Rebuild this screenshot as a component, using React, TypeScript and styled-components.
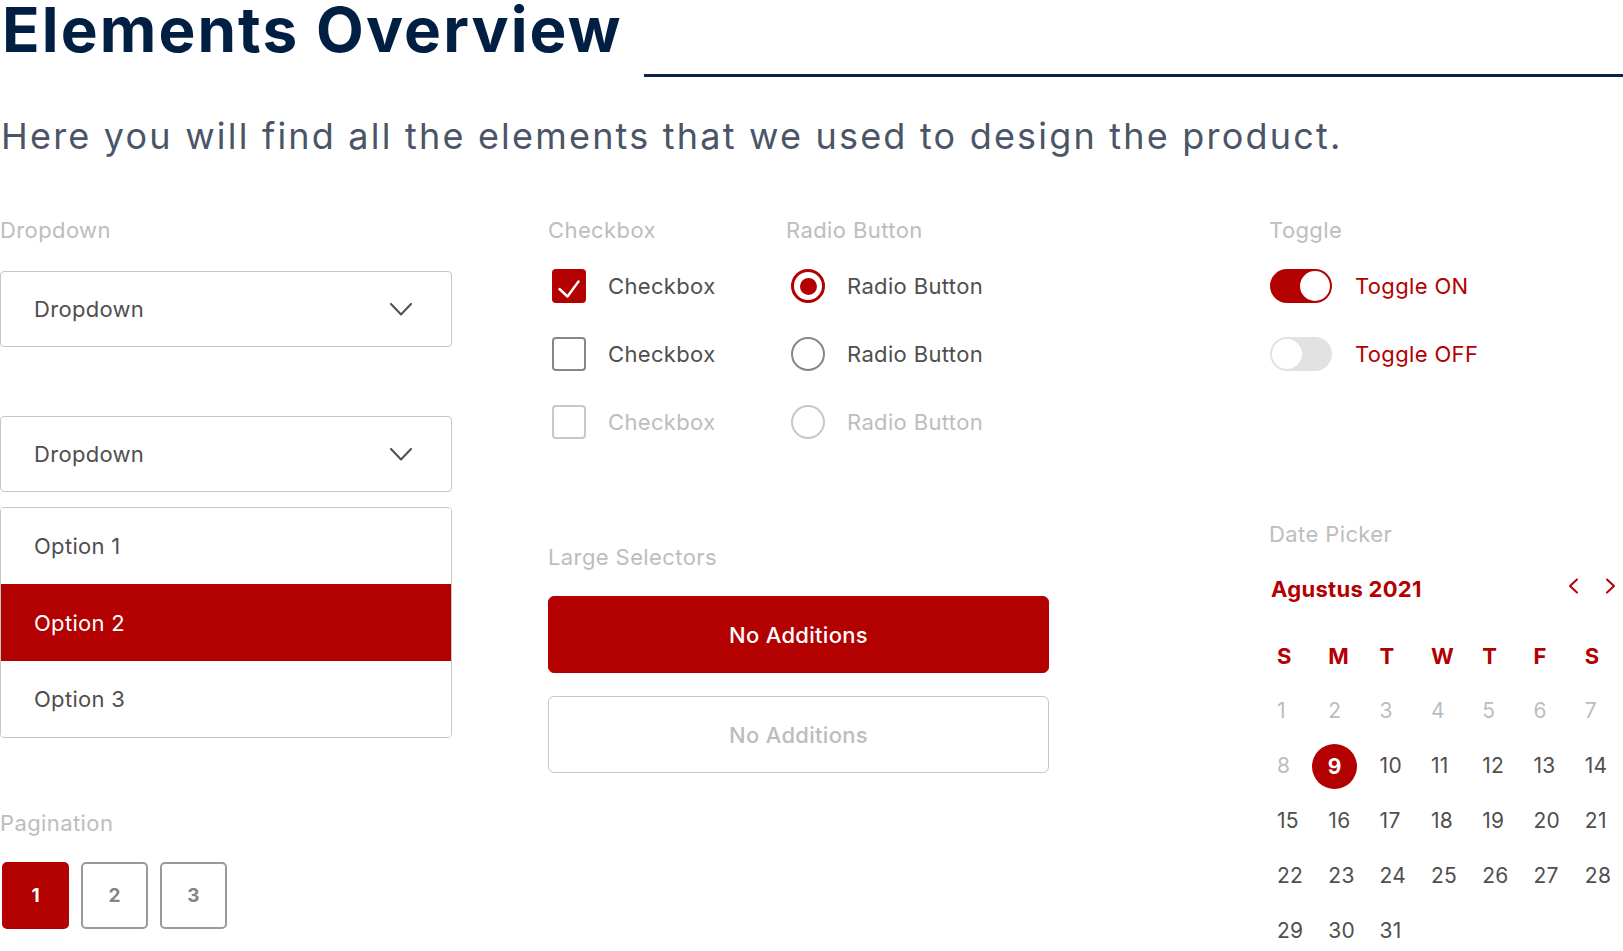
import React from "react";
import styled, { createGlobalStyle } from "styled-components";

const RED = "#b30000";
const NAVY = "#011e43";
const TEXT = "#4f4f4f";
const MUTED = "#bdbdbd";
const BORDER = "#c6c6c6";

const Global = createGlobalStyle`
  html, body { margin: 0; padding: 0; background: #ffffff; }
  body { font-family: Inter, "Noto Sans", sans-serif; color: ${TEXT}; overflow: hidden; }
  * { box-sizing: border-box; }
`;

const Page = styled.div`
  width: 1623px;
  display: flex;
  flex-direction: column;
`;

const Header = styled.header`
  display: flex;
  align-items: flex-start;
  height: 77px;
`;

const Title = styled.h1`
  margin: 2px 0 0 2px;
  font-family: Inter, sans-serif;
  font-weight: 700;
  font-size: 62px;
  line-height: 55px;
  letter-spacing: 2.1px;
  color: ${NAVY};
  white-space: nowrap;
`;

const Rule = styled.div`
  flex: 1;
  height: 3px;
  margin: 74px 0 0 21px;
  background: #0d2343;
`;

const Subtitle = styled.p`
  margin: 39px 0 0 1px;
  font-family: Inter, sans-serif;
  font-weight: 400;
  font-size: 36px;
  line-height: 40px;
  letter-spacing: 2.2px;
  color: #4b5567;
  white-space: nowrap;
`;

const Main = styled.main`
  margin-top: 62px;
  display: grid;
  grid-template-columns: 548px 721px minmax(0, 1fr);
  align-items: start;
`;

const Column = styled.section<{ $width?: number }>`
  display: flex;
  flex-direction: column;
  min-width: 0;
  width: ${(p) => (p.$width ? `${p.$width}px` : "auto")};
`;

const Label = styled.div<{ $mt?: number }>`
  font-size: 22px;
  line-height: 24px;
  letter-spacing: 0.4px;
  color: ${MUTED};
  margin-top: ${(p) => p.$mt ?? 0}px;
`;

const Select = styled.div<{ $mt: number }>`
  margin-top: ${(p) => p.$mt}px;
  height: 76px;
  border: 1px solid ${BORDER};
  border-radius: 4px;
  padding: 0 39px 0 33px;
  display: flex;
  align-items: center;
  justify-content: space-between;
  font-size: 22px;
  letter-spacing: 0.3px;
  color: ${TEXT};
`;

const OptionList = styled.ul`
  list-style: none;
  margin: 15px 0 0;
  padding: 0;
  border: 1px solid ${BORDER};
  border-radius: 4px;
  overflow: hidden;
`;

const OptionItem = styled.li<{ $active?: boolean; $h: number }>`
  height: ${(p) => p.$h}px;
  display: flex;
  align-items: center;
  font-size: 22px;
  letter-spacing: 0.3px;
  color: ${(p) => (p.$active ? "#ffffff" : TEXT)};
  background: ${(p) => (p.$active ? RED : "#ffffff")};
  margin: ${(p) => (p.$active ? "0 -1px" : "0")};
  padding-left: ${(p) => (p.$active ? 34 : 33)}px;
`;

const Pages = styled.div`
  margin-top: 27px;
  margin-left: 2px;
  display: flex;
  gap: 12px;
`;

const PageBtn = styled.div<{ $active?: boolean }>`
  width: 67px;
  height: 67px;
  border-radius: 5px;
  display: flex;
  align-items: center;
  justify-content: center;
  font-size: 19px;
  font-weight: 700;
  color: ${(p) => (p.$active ? "#ffffff" : "#858585")};
  background: ${(p) => (p.$active ? RED : "#ffffff")};
  border: 2px solid ${(p) => (p.$active ? RED : "#9a9a9a")};
`;

const TopRow = styled.div`
  display: flex;
`;

const Group = styled.div<{ $width?: number }>`
  display: flex;
  flex-direction: column;
  width: ${(p) => (p.$width ? `${p.$width}px` : "auto")};
`;

const Rows = styled.div`
  margin-top: 27px;
  display: flex;
  flex-direction: column;
  gap: 34px;
`;

const Row = styled.div<{ $disabled?: boolean; $red?: boolean; $gap: number }>`
  height: 34px;
  display: flex;
  align-items: center;
  gap: ${(p) => p.$gap}px;
  font-size: 22px;
  line-height: 32px;
  letter-spacing: 0.35px;
  color: ${(p) => (p.$red ? RED : p.$disabled ? MUTED : TEXT)};
`;

const Box = styled.span<{ $state: "on" | "off" | "disabled" }>`
  margin-left: 4px;
  width: 34px;
  height: 34px;
  flex: none;
  border-radius: 4px;
  display: inline-flex;
  align-items: center;
  justify-content: center;
  background: ${(p) => (p.$state === "on" ? RED : "#fff")};
  border: ${(p) =>
    p.$state === "on" ? "none" : `2px solid ${p.$state === "off" ? "#878787" : "#c8c8c8"}`};
`;

const Radio = styled.span<{ $state: "on" | "off" | "disabled" }>`
  margin-left: 5px;
  width: 34px;
  height: 34px;
  flex: none;
  border-radius: 50%;
  display: inline-flex;
  align-items: center;
  justify-content: center;
  border: ${(p) =>
    p.$state === "on"
      ? `3px solid ${RED}`
      : `2px solid ${p.$state === "off" ? "#878787" : "#c8c8c8"}`};
`;

const Dot = styled.span`
  width: 17px;
  height: 17px;
  border-radius: 50%;
  background: ${RED};
`;

const Track = styled.span<{ $on?: boolean }>`
  margin-left: 1px;
  width: 62px;
  height: 34px;
  flex: none;
  border-radius: 17px;
  padding: 2px;
  display: flex;
  justify-content: ${(p) => (p.$on ? "flex-end" : "flex-start")};
  background: ${(p) => (p.$on ? RED : "#e2e2e2")};
`;

const Knob = styled.span`
  width: 30px;
  height: 30px;
  border-radius: 50%;
  background: #ffffff;
`;

const Selectors = styled.div`
  margin-top: 106px;
  width: 501px;
  display: flex;
  flex-direction: column;
`;

const BigButton = styled.div<{ $primary?: boolean; $mt: number }>`
  margin-top: ${(p) => p.$mt}px;
  height: 77px;
  border-radius: 6px;
  display: flex;
  align-items: center;
  justify-content: center;
  font-size: 22px;
  font-weight: 500;
  letter-spacing: 0.3px;
  color: ${(p) => (p.$primary ? "#ffffff" : MUTED)};
  background: ${(p) => (p.$primary ? RED : "#ffffff")};
  border: 1px solid ${(p) => (p.$primary ? RED : BORDER)};
`;

const MonthRow = styled.div`
  margin-top: 28px;
  height: 30px;
  display: flex;
  align-items: center;
  justify-content: space-between;
  padding: 0 6px 0 2px;
`;

const Month = styled.div`
  font-size: 22px;
  font-weight: 700;
  letter-spacing: 0.3px;
  color: ${RED};
`;

const Arrows = styled.div`
  display: flex;
  gap: 26px;
  margin-top: -6px;
`;

const CalGrid = styled.div`
  margin-top: 24px;
  padding-left: 8px;
  display: grid;
  grid-template-columns: repeat(6, 51.3px) 1fr;
  grid-auto-rows: 55px;
  align-items: center;
`;

const DayHead = styled.div`
  font-size: 22px;
  font-weight: 700;
  color: ${RED};
`;

const Day = styled.div<{ $muted?: boolean }>`
  font-size: 21px;
  letter-spacing: 0.3px;
  color: ${(p) => (p.$muted ? MUTED : TEXT)};
`;

const Selected = styled.span`
  width: 45px;
  height: 45px;
  margin: 1px 0 -1px -16px;
  border-radius: 50%;
  background: ${RED};
  color: #ffffff;
  font-weight: 700;
  display: inline-flex;
  align-items: center;
  justify-content: center;
`;

const Chevron = () => (
  <svg width="22" height="13" viewBox="0 0 22 13" fill="none">
    <polyline points="1,1 11,11.5 21,1" stroke="#4f4f4f" strokeWidth="2" strokeLinecap="round" strokeLinejoin="round" />
  </svg>
);

const Check = () => (
  <svg width="34" height="34" viewBox="0 0 34 34" fill="none">
    <polyline points="7.5,20 15.5,27.5 26.5,12.5" stroke="#ffffff" strokeWidth="2.4" strokeLinecap="round" strokeLinejoin="round" />
  </svg>
);

const Arrow = ({ dir }: { dir: "left" | "right" }) => (
  <svg width="12" height="16" viewBox="0 0 12 16" fill="none">
    <polyline
      points={dir === "left" ? "10,1.5 3,8 10,14.5" : "2,1.5 9,8 2,14.5"}
      stroke={RED}
      strokeWidth="2"
      strokeLinecap="round"
      strokeLinejoin="round"
    />
  </svg>
);

const weekDays = ["S", "M", "T", "W", "T", "F", "S"];
const days = Array.from({ length: 31 }, (_, i) => i + 1);

export default function App() {
  return (
    <Page>
      <Global />
      <Header>
        <Title>Elements Overview</Title>
        <Rule />
      </Header>
      <Subtitle>Here you will find all the elements that we used to design the product.</Subtitle>

      <Main>
        <Column $width={452}>
          <Label>Dropdown</Label>
          <Select $mt={29}>
            <span>Dropdown</span>
            <Chevron />
          </Select>
          <Select $mt={69}>
            <span>Dropdown</span>
            <Chevron />
          </Select>
          <OptionList>
            <OptionItem $h={76}>Option 1</OptionItem>
            <OptionItem $h={77} $active>
              Option 2
            </OptionItem>
            <OptionItem $h={76}>Option 3</OptionItem>
          </OptionList>
          <Label $mt={73}>Pagination</Label>
          <Pages>
            <PageBtn $active>1</PageBtn>
            <PageBtn>2</PageBtn>
            <PageBtn>3</PageBtn>
          </Pages>
        </Column>

        <Column>
          <TopRow>
            <Group $width={238}>
              <Label>Checkbox</Label>
              <Rows>
                <Row $gap={22}>
                  <Box $state="on">
                    <Check />
                  </Box>
                  Checkbox
                </Row>
                <Row $gap={22}>
                  <Box $state="off" />
                  Checkbox
                </Row>
                <Row $gap={22} $disabled>
                  <Box $state="disabled" />
                  Checkbox
                </Row>
              </Rows>
            </Group>
            <Group>
              <Label>Radio Button</Label>
              <Rows>
                <Row $gap={22}>
                  <Radio $state="on">
                    <Dot />
                  </Radio>
                  Radio Button
                </Row>
                <Row $gap={22}>
                  <Radio $state="off" />
                  Radio Button
                </Row>
                <Row $gap={22} $disabled>
                  <Radio $state="disabled" />
                  Radio Button
                </Row>
              </Rows>
            </Group>
          </TopRow>
          <Selectors>
            <Label>Large Selectors</Label>
            <BigButton $primary $mt={27}>
              No Additions
            </BigButton>
            <BigButton $mt={23}>No Additions</BigButton>
          </Selectors>
        </Column>

        <Column>
          <Label>Toggle</Label>
          <Rows>
            <Row $gap={23} $red>
              <Track $on>
                <Knob />
              </Track>
              Toggle ON
            </Row>
            <Row $gap={23} $red>
              <Track>
                <Knob />
              </Track>
              Toggle OFF
            </Row>
          </Rows>
          <Label $mt={151}>Date Picker</Label>
          <MonthRow>
            <Month>Agustus 2021</Month>
            <Arrows>
              <Arrow dir="left" />
              <Arrow dir="right" />
            </Arrows>
          </MonthRow>
          <CalGrid>
            {weekDays.map((d, i) => (
              <DayHead key={`h${i}`}>{d}</DayHead>
            ))}
            {days.map((d) =>
              d === 9 ? (
                <Day key={d}>
                  <Selected>9</Selected>
                </Day>
              ) : (
                <Day key={d} $muted={d < 9}>
                  {d}
                </Day>
              )
            )}
          </CalGrid>
        </Column>
      </Main>
    </Page>
  );
}
